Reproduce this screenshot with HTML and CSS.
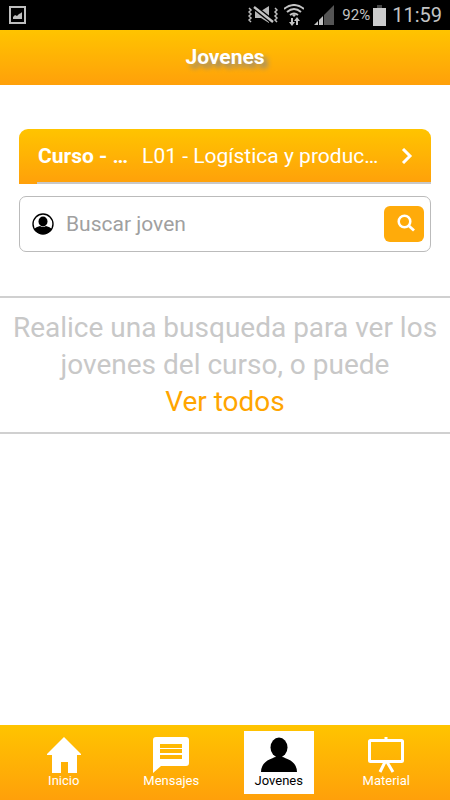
FILE: index.html
```
<!DOCTYPE html>
<html lang="es">
<head>
<meta charset="utf-8">
<meta name="viewport" content="width=device-width, initial-scale=1">
<title>Jovenes</title>
<link rel="stylesheet" href="styles.css">
</head>
<body>
<div class="status">
  <svg class="shot" width="17" height="18" viewBox="0 0 17 18" aria-hidden="true"><path fill="#bfbfbf" fill-rule="evenodd" d="M0 0h17v18H0zM2 2v14h13V2z"/><path fill="#bfbfbf" d="M4 13v-2l2-2 2 1 2-2 2-1 1-1v7z"/></svg>
  <svg width="30" height="20" viewBox="0 0 30 20" aria-hidden="true">
    <path fill="#b8b8b8" d="M7 6h6l8-5v17l-8-5H7z"/>
    <path stroke="#000" stroke-width="5" d="M6 2l19 15"/>
    <path stroke="#c4c4c4" stroke-width="2.4" d="M6 2l19 15"/>
    <path fill="none" stroke="#bdbdbd" stroke-width="1.5" d="M1 3l2 2-2 2 2 2-2 2 2 2-2 2 2 2M27 3l2 2-2 2 2 2-2 2 2 2-2 2 2 2"/>
  </svg>
  <svg class="wifi" width="20" height="22" viewBox="0 0 20 22" aria-hidden="true">
    <g fill="none" stroke="#c4c4c4" stroke-width="2"><path d="M0 5q10-8 20 0M3 8q7-6 14 0M6 11q4-3 8 0"/><path d="M8 14v6M13 21v-6"/></g>
    <path fill="#c4c4c4" d="M5 18h6l-3 4zM10 17h6l-3-4zM8 11l2-1 2 1-2 2z"/>
  </svg>
  <svg class="signal" width="20" height="20" viewBox="0 0 20 20" aria-hidden="true"><path fill="#555" d="M20 0v20H10V10z"/><path fill="#c4c4c4" d="M0 20l4-4v4zM5 20v-5l4-4v9z"/></svg>
  <span class="percent">92%</span>
  <svg class="battery" width="13" height="21" viewBox="0 0 13 21" aria-hidden="true"><path fill="#444" d="M4 0h5v3H4z"/><path fill="#ccc" d="M0 3h13v18H0z"/></svg>
  <span class="clock">11:59</span>
</div>
<header class="header"><h1 class="title">Jovenes</h1></header>
<main class="content">
  <form class="filters">
    <button class="course" type="button">
      <span class="course-label">Curso - …</span>
      <span class="course-value">L01 - Logística y produc…</span>
      <svg width="12" height="16" viewBox="0 0 12 16" aria-hidden="true"><path fill="none" stroke="#fff" stroke-width="3" d="M2 1l7 7-7 7"/></svg>
    </button>
    <div class="search">
      <svg width="22" height="22" viewBox="0 0 22 22" aria-hidden="true"><circle cx="11" cy="11" r="10" fill="#fff" stroke="#000" stroke-width="1.4"/><ellipse cx="11" cy="8.5" rx="4.5" ry="5"/><path d="M2 16q2-2 6-3 3 2 6 0 4 1 6 3-3 5-9 5t-9-5z"/></svg>
      <input class="search-input" type="text" placeholder="Buscar joven" aria-label="Buscar joven">
      <button class="search-button" type="button" aria-label="Buscar">
        <svg width="18" height="18" viewBox="0 0 18 18" aria-hidden="true"><circle cx="7.5" cy="7.5" r="5.8" fill="none" stroke="#fff" stroke-width="2.5"/><path stroke="#fff" stroke-width="2.8" d="M11.5 11.5l5.5 5"/></svg>
      </button>
    </div>
  </form>
  <section class="notice">
    <p class="notice-text">Realice una busqueda para ver los jovenes del curso, o puede</p>
    <a class="notice-link" href="#todos">Ver todos</a>
  </section>
</main>
<nav class="tabs">
  <a class="tab" href="#inicio">
    <svg width="36" height="36" viewBox="0 0 36 36" aria-hidden="true"><path fill="#fff" d="M18 0l17 17v1h-4v18h-9V25h-7v11H6V18H1v-1z"/></svg>
    Inicio
  </a>
  <a class="tab" href="#mensajes">
    <svg width="36" height="36" viewBox="0 0 36 36" aria-hidden="true"><path fill="#fff" fill-rule="evenodd" d="M3 0h30q3 0 3 3v23q0 3-3 3H8l-8 7V3q0-3 3-3zM7 7v4h22V7zM7 12v4h22v-4zM7 18v4h22v-4z"/></svg>
    Mensajes
  </a>
  <a class="tab tab-active" href="#jovenes" aria-current="page">
    <svg width="36" height="36" viewBox="0 0 36 36" aria-hidden="true"><ellipse cx="18" cy="10.5" rx="8.5" ry="10"/><path d="M0 35q0-10 12-14 1-1 3-1h6q2 0 3 1 12 4 12 14z"/></svg>
    Jovenes
  </a>
  <a class="tab" href="#material">
    <svg width="36" height="36" viewBox="0 0 36 36" aria-hidden="true"><g fill="none" stroke="#fff" stroke-width="3"><rect x="1.5" y="3.5" width="33" height="21" rx="1"/><path d="M18 0v3M17 25l-5 10M19 25l6 10"/></g></svg>
    Material
  </a>
</nav>
</body>
</html>
```

FILE: styles.css
```
* { box-sizing: border-box; }

body {
  display: flex;
  flex-direction: column;
  min-height: 100vh;
  margin: 0;
  background: #fff;
  font-family: Roboto, "Liberation Sans", sans-serif;
}

svg { display: block; flex: none; }

.status {
  display: flex;
  align-items: center;
  height: 30px;
  padding: 0 8px 0 9px;
  background: #000;
  color: #c4c4c4;
}
.shot { margin-right: auto; }
.wifi { margin-left: 6px; }
.signal { margin: 0 8px 0 10px; }
.percent { font-size: 15px; }
.battery { margin: 0 6px 0 3px; }
.clock { font-size: 20px; line-height: 30px; }

.header, .course, .tabs { background: linear-gradient(#ffc400, #ffa00a); }

.header {
  display: flex;
  align-items: center;
  justify-content: center;
  height: 55px;
  padding-bottom: 2px;
}
.title {
  margin: 0;
  color: #fff;
  font-size: 21px;
  font-weight: 700;
  text-shadow: 4px 4px 5px #888;
}

.content { flex: 1; }
.filters {
  display: grid;
  gap: 12px;
  margin: 44px 19px;
}
.course {
  position: relative;
  display: flex;
  align-items: center;
  height: 55px;
  padding: 0 18px 2px 19px;
  border: 0;
  border-radius: 9px 9px 0 0;
  color: #fff;
  font-family: inherit;
  font-size: 21px;
  text-align: left;
}
.course::after {
  position: absolute;
  right: 0;
  bottom: 0;
  left: 18px;
  height: 2px;
  background: #c8c8c8;
  content: "";
}
.course-label {
  margin-right: 14px;
  font-weight: 700;
  white-space: nowrap;
}
.course-value {
  flex: 1;
  overflow: hidden;
  white-space: nowrap;
}
.search {
  display: flex;
  align-items: center;
  height: 56px;
  padding: 0 6px 0 12px;
  border: 1px solid #bbb;
  border-radius: 7px;
}
.search-input {
  flex: 1;
  min-width: 0;
  padding: 0 12px;
  border: 0;
  background: none;
  font-family: inherit;
  font-size: 21px;
}
.search-input::placeholder { color: #a0a0a0; }
.search-button {
  display: grid;
  place-items: center;
  width: 40px;
  height: 36px;
  padding: 0 0 2px 4px;
  border: 0;
  border-radius: 6px;
  background: #ffab0a;
}

.notice {
  padding: 11px 8px 12px;
  border: solid #d0d0d0;
  border-width: 2px 0;
  color: #c8c8c8;
  font-size: 28px;
  line-height: 37px;
  text-align: center;
}
.notice-text { margin: 0; }
.notice-link { color: #ffa500; text-decoration: none; }

.tabs {
  display: grid;
  grid-template-columns: repeat(4, 1fr);
  justify-items: center;
  height: 75px;
  padding: 6px 10px;
}
.tab {
  display: flex;
  flex-direction: column;
  align-items: center;
  width: 70px;
  padding-top: 6px;
  color: #fff;
  font-size: 13px;
  line-height: 16px;
  text-decoration: none;
}
.tab-active { background: #fff; color: #000; }
```
